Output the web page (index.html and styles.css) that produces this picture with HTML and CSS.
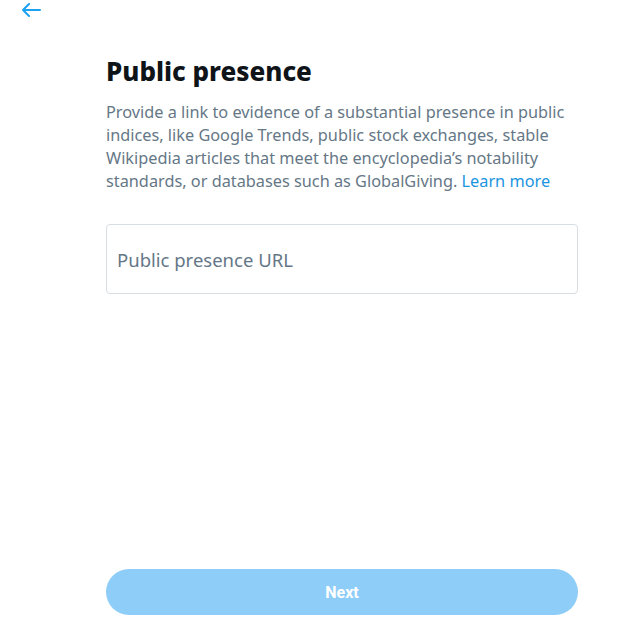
FILE: index.html
```html
<!DOCTYPE html>
<html lang="en">
<head>
    <meta charset="UTF-8">
    <title>Public presence</title>
    <link rel="stylesheet" href="styles.css">
</head>
<body>
    <div class="page">
        <div class="topbar">
            <button class="back" aria-label="Back">
                <svg viewBox="0 0 20 14" width="20" height="14">
                    <path d="M19 7H2M8 1L2 7l6 6" fill="none" stroke="#1da1f2" stroke-width="2" stroke-linecap="round" stroke-linejoin="round"/>
                </svg>
            </button>
        </div>

        <main class="content">
            <h1>Public presence</h1>
            <p class="lead">
                Provide a link to evidence of a substantial presence in public
                indices, like Google Trends, public stock exchanges, stable
                Wikipedia articles that meet the encyclopedia’s notability
                standards, or databases such as GlobalGiving. <a href="#">Learn more</a>
            </p>
            <input class="field" type="text" placeholder="Public presence URL">
        </main>

        <div class="footer">
            <button class="next" disabled>Next</button>
        </div>
    </div>
</body>
</html>
```

FILE: styles.css
```css
body {
    margin: 0;
    background: #fff;
    font-family: "Noto Sans", "Open Sans", sans-serif;
    color: #14171a;
}
.page {
    height: 635px;
    display: flex;
    flex-direction: column;
}
.topbar {
    padding: 3px 0 0 21px;
    height: 20px;
}
.back {
    background: none;
    border: none;
    padding: 0;
    cursor: pointer;
    display: block;
}
.back svg {
    display: block;
}
.content {
    flex: 1;
    padding: 0 64px 0 106px;
}
h1 {
    margin: 32px 0 0;
    font-size: 26px;
    font-weight: 800;
    line-height: 33px;
    color: #0f1419;
}
.lead {
    margin: 13px 0 0;
    font-size: 16.3px;
    line-height: 23px;
    color: #657786;
}
.lead a {
    color: #1b95e0;
    text-decoration: none;
}
.field {
    display: block;
    box-sizing: border-box;
    width: 100%;
    height: 70px;
    margin-top: 31px;
    padding: 0 10px;
    border: 1px solid #d8dde1;
    border-radius: 4px;
    font-family: inherit;
    font-size: 18.5px;
    color: #14171a;
    outline: none;
}
.field::placeholder {
    color: #657786;
}
.footer {
    padding: 0 64px 20px 106px;
}
.next {
    display: block;
    width: 100%;
    height: 46px;
    border: none;
    border-radius: 23px;
    background: #8ecdf8;
    color: #fff;
    font-family: "Roboto", "Noto Sans", sans-serif;
    font-size: 16px;
    font-weight: 700;
    cursor: default;
}
```
